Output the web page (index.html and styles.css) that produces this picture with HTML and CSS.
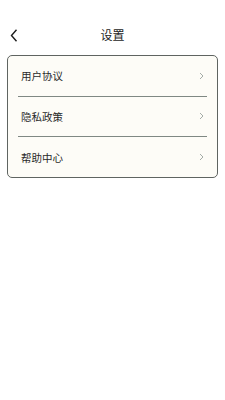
FILE: index.html
```html
<!DOCTYPE html>
<html lang="zh-CN">
<head>
    <meta charset="UTF-8">
    <meta name="viewport" content="width=device-width, initial-scale=1.0">
    <title>设置</title>
<link rel="stylesheet" href="styles.css">
</head>
<body>
<div class="page">
    <div class="topbar">
        <span class="back">
            <svg width="8" height="13" viewBox="0 0 8 13"><polyline points="6.5,0.8 1.5,6.5 6.5,12.2" fill="none" stroke="#1c1c1c" stroke-width="1.4"/></svg>
        </span>
        <h2 class="title">设置</h2>
    </div>

    <!-- menu card -->
    <div class="card">
        <div class="row">
            <span class="label">用户协议</span>
            <svg class="arrow" width="5" height="8" viewBox="0 0 5 8"><polyline points="1,1 4,4 1,7" fill="none" stroke="#9aa39d" stroke-width="0.9"/></svg>
        </div>
        <div class="row">
            <span class="label">隐私政策</span>
            <svg class="arrow" width="5" height="8" viewBox="0 0 5 8"><polyline points="1,1 4,4 1,7" fill="none" stroke="#9aa39d" stroke-width="0.9"/></svg>
        </div>
        <div class="row last">
            <span class="label">帮助中心</span>
            <svg class="arrow" width="5" height="8" viewBox="0 0 5 8"><polyline points="1,1 4,4 1,7" fill="none" stroke="#9aa39d" stroke-width="0.9"/></svg>
        </div>
    </div>
</div>
</body>
</html>
```

FILE: styles.css
```css
body {
  margin: 0;
  background-color: #fff;
  font-family: "Noto Sans CJK SC", "Noto Sans", sans-serif;
  color: #222;
}

.page {
  width: 225px;
}

/*Top bar*/
.topbar {
  display: flex;
  align-items: center;
  justify-content: center;
  position: relative;
  height: 26px;
  padding-top: 22px;
}
.back {
  position: absolute;
  left: 10px;
  top: 29px;
  display: flex;
}
.title {
  margin: 0;
  font-size: 12px;
  font-weight: normal;
  line-height: 26px;
  color: #1c1c1c;
}

/*Card*/
.card {
  margin: 7px 7px 0;
  border: 1px solid #5f6461;
  border-radius: 5px;
  background-color: #fdfcf7;
}
.row {
  display: flex;
  align-items: center;
  justify-content: space-between;
  height: 39.5px;
  margin: 0 10px;
  padding: 0 3px;
  border-bottom: 1.5px solid #7f8883;
}
.row.last {
  border-bottom: none;
  height: 40px;
}
.label {
  font-size: 10.5px;
  color: #2a2a2a;
}
.arrow {
  display: block;
}
```
